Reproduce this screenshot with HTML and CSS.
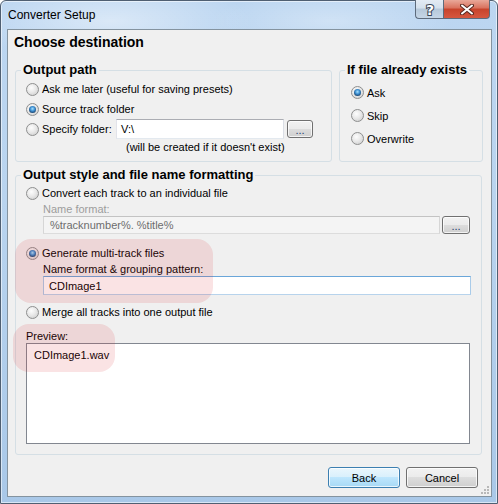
FILE: index.html
```html
<!DOCTYPE html>
<html lang="en">
<head>
    <meta charset="UTF-8">
    <title>Converter Setup</title>
    <link rel="stylesheet" href="styles.css">
</head>
<body>
    <div class="window">
        <div class="titlebar">
            <span class="title">Converter Setup</span>
            <div class="caption-buttons">
                <span class="cap-btn help">
                    <svg width="12" height="15" viewBox="0 0 12 15">
                        <text x="6" y="13" text-anchor="middle" class="help-glyph">?</text>
                    </svg>
                </span>
                <span class="cap-btn close">
                    <svg width="14" height="11" viewBox="0 0 14 11">
                        <path d="M2 1.5L12 9.5M12 1.5L2 9.5" stroke="#5a2a22" stroke-width="4" stroke-linecap="round"/>
                        <path d="M2 1.5L12 9.5M12 1.5L2 9.5" stroke="#fff" stroke-width="2" stroke-linecap="round"/>
                    </svg>
                </span>
            </div>
        </div>
        <div class="client">
            <h1>Choose destination</h1>
            <div class="top-row">
                <fieldset class="group path-group">
                    <legend>Output path</legend>
                    <div class="group-body">
                        <div class="radio-row"><span class="radio"></span>Ask me later (useful for saving presets)</div>
                        <div class="radio-row"><span class="radio checked"></span>Source track folder</div>
                        <div class="radio-row">
                            <span class="radio"></span><span class="folder-label">Specify folder:</span>
                            <span class="textbox folder-box">V:\</span>
                            <span class="btn dots">...</span>
                        </div>
                        <div class="hint">(will be created if it doesn't exist)</div>
                    </div>
                </fieldset>
                <fieldset class="group exists-group">
                    <legend>If file already exists</legend>
                    <div class="group-body">
                        <div class="radio-row tall"><span class="radio checked"></span>Ask</div>
                        <div class="radio-row tall"><span class="radio"></span>Skip</div>
                        <div class="radio-row tall"><span class="radio"></span>Overwrite</div>
                    </div>
                </fieldset>
            </div>
            <fieldset class="group style-group">
                <legend>Output style and file name formatting</legend>
                <div class="group-body">
                    <div class="radio-row short"><span class="radio"></span>Convert each track to an individual file</div>
                    <div class="sub-label disabled">Name format:</div>
                    <div class="field-row">
                        <span class="textbox disabled-box wide">%tracknumber%. %title%</span>
                        <span class="btn dots wide-dots">...</span>
                    </div>
                    <div class="radio-row short gap"><span class="radio checked"></span>Generate multi-track files</div>
                    <div class="sub-label">Name format &amp; grouping pattern:</div>
                    <div class="field-row">
                        <span class="textbox focused full">CDImage1</span>
                    </div>
                    <div class="radio-row short merge"><span class="radio"></span>Merge all tracks into one output file</div>
                    <div class="preview-label">Preview:</div>
                    <div class="preview">CDImage1.wav</div>
                </div>
            </fieldset>
            <div class="button-row">
                <span class="btn push default">Back</span>
                <span class="btn push">Cancel</span>
            </div>
            <span class="mark mark-generate"></span>
            <span class="mark mark-preview"></span>
            <svg class="grip" width="9" height="9" viewBox="0 0 9 9">
                <rect x="7" y="1" width="2" height="2" fill="#b8b8b8"/>
                <rect x="4" y="4" width="2" height="2" fill="#b8b8b8"/>
                <rect x="7" y="4" width="2" height="2" fill="#b8b8b8"/>
                <rect x="1" y="7" width="2" height="2" fill="#b8b8b8"/>
                <rect x="4" y="7" width="2" height="2" fill="#b8b8b8"/>
                <rect x="7" y="7" width="2" height="2" fill="#b8b8b8"/>
            </svg>
        </div>
    </div>
</body>
</html>
```

FILE: styles.css
```css
body {
    margin: 0;
    background: #fff;
    font-family: "Liberation Sans", Arial, sans-serif;
    font-size: 11px;
    color: #000;
}
.window {
    width: 498px;
    height: 504px;
    box-sizing: border-box;
    border: 1px solid #4f5f72;
    border-radius: 6px 6px 0 0;
    background:
        radial-gradient(ellipse 140px 40px at 110px 20px, rgba(255,255,255,0.45), rgba(255,255,255,0)),
        radial-gradient(ellipse 120px 30px at 330px 20px, rgba(255,255,255,0.3), rgba(255,255,255,0)),
        linear-gradient(180deg, #bcd6f1 0%, #b9d4ef 40%, #a9c8e8 100%);
    box-shadow: inset 0 0 0 1px rgba(255,255,255,0.55);
    display: flex;
    flex-direction: column;
}
.titlebar {
    height: 28px;
    display: flex;
    justify-content: space-between;
    align-items: flex-start;
}
.title {
    font-size: 12px;
    line-height: 16px;
    padding: 6px 0 0 7px;
}
.caption-buttons {
    display: flex;
    margin: -1px 7px 0 0;
}
.cap-btn {
    height: 19px;
    box-sizing: border-box;
    border: 1px solid #5d6b7c;
    border-top: none;
    display: flex;
    align-items: center;
    justify-content: center;
}
.help {
    width: 28px;
    border-right: none;
    border-radius: 0 0 0 4px;
    background: linear-gradient(180deg, #e3ebf4 0%, #d4e0ec 45%, #b6c8da 50%, #c5d6e6 100%);
}
.help-glyph {
    font-family: "DejaVu Sans", sans-serif;
    font-size: 14px;
    font-weight: bold;
    fill: #fff;
    stroke: #3a4656;
    stroke-width: 2px;
    paint-order: stroke;
}
.close {
    width: 47px;
    border-radius: 0 0 4px 0;
    background: linear-gradient(180deg, #e9a899 0%, #d9715d 45%, #c7432b 50%, #d6573f 100%);
}
.client {
    position: relative;
    margin: 0 5px 6px 6px;
    flex: 1;
    box-sizing: border-box;
    border: 1px solid #84939f;
    background: #f0f0f0;
    display: flex;
    flex-direction: column;
}
h1 {
    margin: 0 0 10px;
    padding: 2px 0 0 6px;
    font-size: 14px;
    line-height: 20px;
}
.top-row {
    display: flex;
    gap: 7px;
    margin-left: 7px;
}
.group {
    margin: 0;
    padding: 0;
    box-sizing: border-box;
    border: 1px solid #d5dfe5;
    border-radius: 3px;
    min-width: 0;
}
.group legend {
    margin-left: 5px;
    padding: 0 2px;
    font-size: 13px;
    font-weight: bold;
    line-height: 16px;
}
.path-group {
    width: 317px;
    height: 100px;
}
.path-group .group-body {
    padding: 1px 0 0 10px;
}
.exists-group {
    width: 144px;
    height: 100px;
}
.exists-group .group-body {
    padding: 3px 0 0 11px;
}
.radio-row {
    display: flex;
    align-items: center;
    height: 20px;
    white-space: nowrap;
}
.radio-row.tall {
    height: 23px;
}
.radio-row.short {
    height: 18px;
}
.radio {
    flex: none;
    position: relative;
    width: 13px;
    height: 13px;
    box-sizing: border-box;
    margin-right: 3px;
    border: 1px solid #8e8f8f;
    border-radius: 50%;
    background: radial-gradient(circle at 40% 35%, #fdfdfd 0%, #e9e9e9 45%, #c8c8c8 100%);
}
.radio.checked::after {
    content: "";
    position: absolute;
    left: 2px;
    top: 2px;
    width: 7px;
    height: 7px;
    border-radius: 50%;
    background: radial-gradient(circle at 50% 40%, #a8e2ff 0%, #3d90d3 40%, #1a4672 75%, #1c2a3a 100%);
}
.folder-label {
    width: 74px;
}
.textbox {
    box-sizing: border-box;
    display: flex;
    align-items: center;
    background: #fff;
    border: 1px solid;
    border-color: #abadb3 #dbdfe6 #e3e9ef #e2e3ea;
    padding-left: 4px;
}
.folder-box {
    width: 168px;
    height: 20px;
}
.btn {
    box-sizing: border-box;
    display: flex;
    align-items: center;
    justify-content: center;
    border: 1px solid #707070;
    border-radius: 3px;
    background: linear-gradient(180deg, #f2f2f2 0%, #ebebeb 49%, #dddddd 50%, #cfcfcf 100%);
    box-shadow: inset 0 0 0 1px rgba(255,255,255,0.75);
}
.dots {
    width: 26px;
    height: 18px;
    margin-left: 3px;
    font-size: 11px;
    color: #1d3f6e;
    line-height: 1;
    padding-top: 2px;
}
.hint {
    padding-left: 100px;
    line-height: 16px;
}
.style-group {
    width: 467px;
    height: 288px;
    margin: 5px 0 0 7px;
}
.style-group .group-body {
    padding: 1px 10px 0 10px;
}
.sub-label {
    padding-left: 17px;
    line-height: 14px;
}
.disabled {
    color: #9d9d9d;
}
.field-row {
    display: flex;
    padding-left: 17px;
}
.disabled-box {
    width: 397px;
    height: 18px;
    background: #f4f4f4;
    border-color: #c3c3c3 #d6d6d6 #dcdcdc #d6d6d6;
    color: #6d6d6d;
    padding-left: 6px;
}
.wide-dots {
    width: 28px;
    margin-left: 2px;
}
.gap {
    margin-top: 10px;
}
.focused {
    border-color: #6aa6d9 #a9cbe9 #b7d3ec #a9cbe9;
}
.full {
    width: 428px;
    height: 19px;
    padding-left: 5px;
}
.merge {
    margin-top: 8px;
}
.preview-label {
    margin-top: 9px;
    line-height: 13px;
}
.preview {
    width: 444px;
    height: 101px;
    box-sizing: border-box;
    border: 1px solid #828790;
    background: #fff;
    padding: 3px 0 0 7px;
    line-height: 16px;
}
.button-row {
    display: flex;
    justify-content: flex-end;
    gap: 6px;
    margin-top: 12px;
    padding-right: 13px;
}
.push {
    width: 72px;
    height: 21px;
}
.push.default {
    border-color: #3c7fb1;
    background: linear-gradient(180deg, #eaf6fd 0%, #d9f0fc 49%, #bee6fd 50%, #a7d9f5 100%);
}
.mark {
    position: absolute;
    border-radius: 16px;
    background: rgba(220, 40, 50, 0.13);
}
.mark-generate {
    left: 7px;
    top: 209px;
    width: 198px;
    height: 64px;
}
.mark-preview {
    left: 5px;
    top: 294px;
    width: 102px;
    height: 48px;
}
.grip {
    position: absolute;
    right: 2px;
    bottom: 2px;
}
```
